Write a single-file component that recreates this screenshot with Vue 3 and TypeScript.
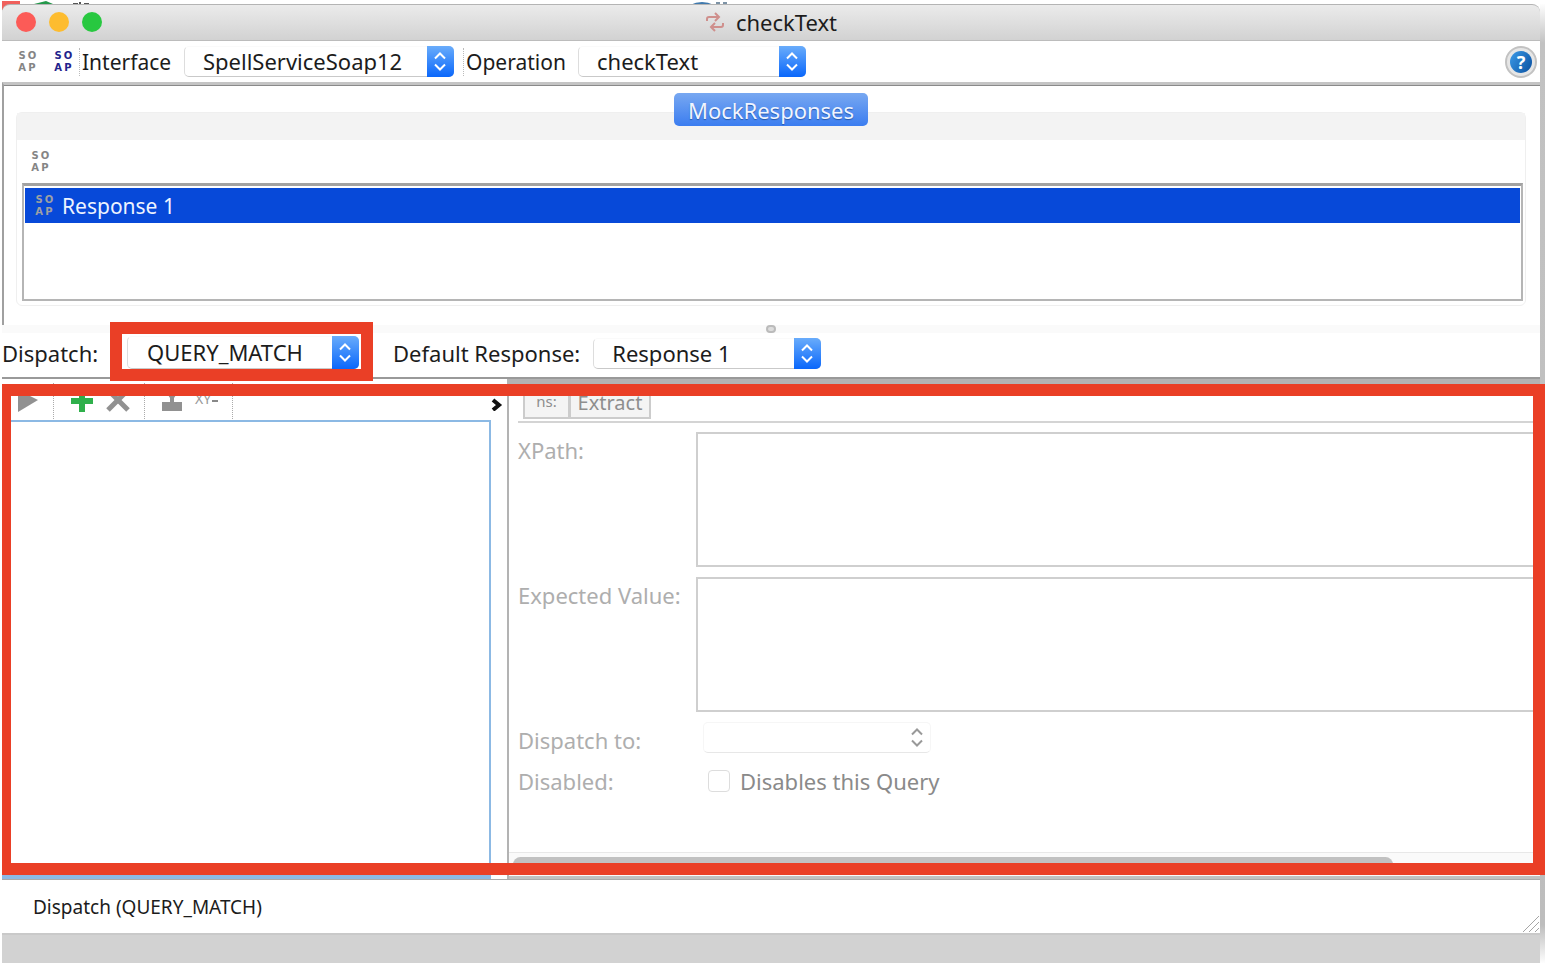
<script setup lang="ts">
import { ref } from 'vue'

const iface = ref('SpellServiceSoap12')
const operation = ref('checkText')
const dispatch = ref('QUERY_MATCH')
const defaultResponse = ref('Response 1')
const responses = ['Response 1']
const xpath = ref('')
const expected = ref('')
const soapLetters = ['S', 'O', 'A', 'P']
</script>

<template>
  <div class="desktop">
    <svg class="behind" width="760" height="10" aria-hidden="true">
      <rect x="0" y="1" width="18" height="9" fill="#f0605c" />
      <path d="M32 4 L44 1 L51 4Z" fill="#23984a" />
      <path d="M71 4h5M78 2v3M82 4h5" stroke="#555" stroke-width="2" />
      <path d="M688 5 Q700 -1 712 5Z" fill="#3f79ad" />
      <path d="M714 3h4M721 3h4" stroke="#7d93a6" stroke-width="2" />
    </svg>
    <main class="window">
      <header class="titlebar">
        <div class="lights">
          <button class="light close" aria-label="Close"></button>
          <button class="light minimize" aria-label="Minimize"></button>
          <button class="light maximize" aria-label="Zoom"></button>
        </div>
        <h1 class="title">
          <svg width="20" height="20" viewBox="0 0 20 20" fill="none" stroke="#cf8f8c" stroke-width="2" aria-hidden="true">
            <path d="M2 9V7Q2 5 4 5h9M10 1l4 4-4 4" />
            <path d="M18 11v2q0 2-2 2H7M10 11l-4 4 4 4" />
          </svg>
          checkText
        </h1>
      </header>

      <div class="toolbar">
        <button class="soap" aria-label="New mock response"><span v-for="l in soapLetters" :key="l">{{ l }}</span></button>
        <button class="soap navy" aria-label="New mock fault"><span v-for="l in soapLetters" :key="l">{{ l }}</span></button>
        <label class="tool-label" for="iface">Interface</label>
        <div class="combo wide">
          <select id="iface" v-model="iface"><option>SpellServiceSoap12</option></select>
          <svg class="arrows" viewBox="0 0 27 30" aria-hidden="true"><path d="M8 12l5-5 5 5M8 18l5 5 5-5" /></svg>
        </div>
        <label class="tool-label op" for="operation">Operation</label>
        <div class="combo">
          <select id="operation" v-model="operation"><option>checkText</option></select>
          <svg class="arrows" viewBox="0 0 27 30" aria-hidden="true"><path d="M8 12l5-5 5 5M8 18l5 5 5-5" /></svg>
        </div>
        <button class="help" aria-label="Help"><span>?</span></button>
      </div>

      <section class="responses">
        <button class="tab">MockResponses</button>
        <div class="group">
          <div class="group-head"></div>
          <div class="group-tools">
            <button class="soap" aria-label="Add response"><span v-for="l in soapLetters" :key="l">{{ l }}</span></button>
          </div>
          <ul class="list">
            <li v-for="r in responses" :key="r" class="item">
              <span class="soap pale" aria-hidden="true"><span v-for="l in soapLetters" :key="l">{{ l }}</span></span>
              {{ r }}
            </li>
          </ul>
        </div>
      </section>
      <div class="divider"><span class="knob"></span></div>

      <div class="dispatch-row">
        <label for="dispatch">Dispatch:</label>
        <div class="highlight">
          <div class="combo">
            <select id="dispatch" v-model="dispatch"><option>QUERY_MATCH</option></select>
            <svg class="arrows" viewBox="0 0 27 30" aria-hidden="true"><path d="M8 12l5-5 5 5M8 18l5 5 5-5" /></svg>
          </div>
        </div>
        <label class="default-label" for="default-response">Default Response:</label>
        <div class="combo">
          <select id="default-response" v-model="defaultResponse"><option>Response 1</option></select>
          <svg class="arrows" viewBox="0 0 27 30" aria-hidden="true"><path d="M8 12l5-5 5 5M8 18l5 5 5-5" /></svg>
        </div>
      </div>

      <section class="split">
        <div class="queries">
          <div class="query-tools">
            <button class="glyph play" aria-label="Run"><svg width="22" height="24"><path d="M1 0L21 10 1 22Z" fill="#919191" /></svg></button>
            <button class="glyph add" aria-label="Add query"><svg width="24" height="24"><path d="M12 0v22M1 11h22" stroke="#2fb04b" stroke-width="6" /></svg></button>
            <button class="glyph remove" aria-label="Remove query"><svg width="24" height="24"><path d="M2 0l20 20M22 0L2 20" stroke="#919191" stroke-width="5" /></svg></button>
            <button class="glyph clone" aria-label="Clone query"><svg width="22" height="24"><path d="M7 0h8v5l-2 3v4h8v9H1v-9h8V8L7 5Z" fill="#919191" /></svg></button>
            <button class="glyph rename" aria-label="Rename query">XY<i></i></button>
            <svg class="chevron" width="12" height="14" aria-hidden="true"><path d="M2 3l6 5-6 5" fill="none" stroke="#111" stroke-width="4" /></svg>
          </div>
          <div class="query-list"></div>
        </div>
        <div class="editor">
          <div class="editor-tabs">
            <button class="ns">ns:</button>
            <button>Extract</button>
          </div>
          <div class="form">
            <label for="xpath">XPath:</label>
            <textarea id="xpath" v-model="xpath"></textarea>
            <label for="expected">Expected Value:</label>
            <textarea id="expected" v-model="expected"></textarea>
            <label for="dispatch-to">Dispatch to:</label>
            <div class="combo off">
              <select id="dispatch-to" disabled></select>
              <svg class="arrows" viewBox="0 0 27 30" aria-hidden="true"><path d="M8 12l5-5 5 5M8 18l5 5 5-5" /></svg>
            </div>
            <span>Disabled:</span>
            <label class="check"><input type="checkbox" disabled />Disables this Query</label>
          </div>
          <div class="scroll"><div class="thumb"></div></div>
        </div>
        <div class="frame"></div>
      </section>

      <footer class="status">
        Dispatch (QUERY_MATCH)
        <svg class="grip" width="18" height="18" aria-hidden="true"><path d="M1 17L17 1M7 17L17 7M13 17l4-4" stroke="#a5a5a5" stroke-width="1" /></svg>
      </footer>
      <div class="base"></div>
    </main>
  </div>
</template>

<style>
body {
  margin: 0;
  background: #fff;
}
</style>

<style scoped>
* {
  box-sizing: border-box;
}
.desktop {
  position: relative;
  display: flex;
  min-height: 100vh;
  padding: 4px 0 0 2px;
  color: #1c1c1c;
  font-family: "Noto Sans", "Open Sans", sans-serif;
  font-size: 22px;
  line-height: 28px;
}
.behind {
  position: absolute;
  left: 2px;
  top: 0;
}
.window {
  position: relative;
  display: flex;
  flex: 1;
  flex-direction: column;
  border-right: 5px solid;
  border-image: linear-gradient(#fff, #c2c2c2 40px, #bdbdbd 920px, #fff) 1;
}
button,
select,
textarea {
  margin: 0;
  color: inherit;
  font: inherit;
}
button {
  padding: 0;
  border: 0;
  background: none;
}
.titlebar {
  display: grid;
  grid-template-columns: 1fr auto 1fr;
  align-items: center;
  height: 37px;
  padding-bottom: 2px;
  border-top: 1px solid #b4b4b4;
  border-bottom: 1px solid #bcbcbc;
  border-radius: 8px 8px 0 0;
  background: linear-gradient(#ebebeb, #d2d2d2);
}
.lights {
  display: flex;
  gap: 13px;
  padding-left: 14px;
}
.light {
  width: 20px;
  height: 20px;
  border-radius: 50%;
}
.close { background: #fc5b57; }
.minimize { background: #fdbc2f; }
.maximize { background: #28c840; }
.title {
  display: flex;
  align-items: center;
  gap: 11px;
  margin: 0;
  font-size: 22px;
  font-weight: 400;
}
.toolbar {
  display: flex;
  align-items: center;
  height: 41px;
  padding: 0 3px 0 15px;
  background: #fff;
}
.soap {
  display: grid;
  flex: none;
  grid-template-columns: 10px 10px;
  grid-auto-rows: 12px;
  width: 20px;
  color: #858585;
  font: bold 10px/12px "DejaVu Sans", sans-serif;
  text-align: center;
}
.soap.navy {
  margin-left: 16px;
  color: #23238c;
}
.soap.pale { color: #9da0a4; }
.tool-label {
  width: 99px;
  margin-left: 6px;
  padding-left: 2px;
  border-left: 1px dotted #bbb;
  font-size: 21px;
}
.tool-label.op {
  width: 109px;
  margin-left: 9px;
}
.combo {
  position: relative;
  width: 228px;
  height: 31px;
  margin-left: 6px;
}
.combo.wide { width: 270px; }
.combo select {
  display: block;
  width: 100%;
  height: 100%;
  padding: 0 28px 2px 18px;
  border: 1px solid #ddd;
  border-top-color: #fafafa;
  border-bottom-color: #c9c9c9;
  border-radius: 5px;
  background: #fff;
  appearance: none;
}
.arrows {
  position: absolute;
  top: 0;
  right: 0;
  width: 27px;
  height: 31px;
  border-radius: 0 5px 5px 0;
  background: linear-gradient(#69acfb, #0a67fb);
  fill: none;
  stroke: #fff;
  stroke-width: 2;
  pointer-events: none;
}
.help {
  display: flex;
  align-items: center;
  justify-content: center;
  width: 32px;
  height: 32px;
  margin-left: auto;
  border: 2px solid #c2c2c2;
  border-radius: 50%;
  background: #e6e6e6;
}
.help span {
  width: 22px;
  height: 22px;
  border-radius: 50%;
  background: linear-gradient(120deg, #3b9be8, #0a4f9f);
  color: #fff;
  font-size: 18px;
  font-weight: 700;
  line-height: 22px;
}
.responses {
  display: flex;
  flex-direction: column;
  height: 243px;
  padding: 8px 14px 0 12px;
  border-top: 3px solid #c4c4c4;
  border-left: 2px solid #a0a0a0;
  background: #fff;
  box-shadow: inset 0 1px #8a8a8a;
}
.tab {
  z-index: 1;
  align-self: center;
  width: 194px;
  height: 33px;
  border-radius: 5px;
  background: linear-gradient(#78a8f1, #3b7df0);
  color: #f0f5ff;
  text-shadow: 0 1px 1px #2657a8;
}
.group {
  margin-top: -14px;
  padding: 0 2px 4px 5px;
  border: 1px solid #efefef;
  border-radius: 6px;
}
.group-head {
  height: 27px;
  margin: 0 -2px 0 -5px;
  background: #f3f3f3;
}
.group-tools {
  display: flex;
  align-items: center;
  height: 43px;
  padding-left: 8px;
}
.list {
  height: 118px;
  margin: 0;
  padding: 2px 1px;
  border: 2px solid #b5b5b5;
  border-top: 3px solid #a2a2a2;
  list-style: none;
}
.item {
  display: flex;
  align-items: center;
  gap: 8px;
  height: 35px;
  padding-left: 9px;
  background: #0749d9;
  color: #edf3ff;
  font-size: 21px;
}
.divider {
  display: flex;
  justify-content: center;
  align-items: flex-start;
  height: 8px;
  background: #fafafa;
}
.knob {
  width: 10px;
  height: 8px;
  border: 2px solid #bbb;
  border-radius: 4px;
  background: #ddd;
}
.dispatch-row {
  display: flex;
  align-items: center;
  height: 44px;
  padding-bottom: 4px;
  background: #fff;
}
.highlight {
  flex: none;
  align-self: flex-start;
  z-index: 2;
  width: 263px;
  margin: -11px 0 -10px 10px;
  padding: 2px 2px 0 5px;
  border: 12px solid #ea3f26;
  background: #fff;
}
.highlight .combo {
  width: auto;
  height: 33px;
  margin: 0;
}
.highlight .arrows { height: 33px; }
.highlight select { padding-left: 19px; }
.default-label { margin-left: 20px; }
.default-label + .combo { margin-left: 13px; }
.dispatch-row > label:first-child { width: 98px; }
.split {
  position: relative;
  display: flex;
  flex: 1;
  border-top: 2px solid #999;
  background: #fff;
}
.frame {
  position: absolute;
  inset: 5px -5px 4px 0;
  border: 12px solid #ea3f26;
  border-left-width: 9px;
  pointer-events: none;
}
.queries {
  display: flex;
  flex: 0 0 505px;
  flex-direction: column;
}
.query-tools {
  display: flex;
  align-items: center;
  height: 41px;
  padding: 4px 4px 0 15px;
}
.glyph {
  display: flex;
  align-items: center;
  height: 38px;
}
.glyph.play,
.glyph.remove {
  padding-right: 14px;
  border-right: 1px dotted #aaa;
}
.glyph.add { padding: 0 12px 0 16px; }
.glyph.clone { padding: 0 12px 0 16px; }
.glyph.rename {
  gap: 1px;
  padding: 0 14px 6px 0;
  border-right: 1px dotted #aaa;
  color: #999;
  font-size: 14px;
}
.glyph.rename i {
  width: 6px;
  height: 2px;
  margin-top: 4px;
  background: #888;
}
.chevron {
  margin: 5px 0 0 auto;
}
.query-list {
  flex: 1;
  margin-right: 16px;
  border: 2px solid #8cb9e4;
  border-bottom-width: 5px;
}
.editor {
  display: flex;
  flex: 1;
  flex-direction: column;
  min-width: 0;
  border-top: 5px solid #b3b3b3;
  border-left: 2px solid #b3b3b3;
  color: #aeaeae;
}
.editor-tabs {
  display: flex;
  height: 39px;
  margin-left: 9px;
  padding: 0 0 2px 5px;
  border-bottom: 2px solid #d4d4d4;
}
.editor-tabs button {
  width: 82px;
  padding-top: 5px;
  border: 2px solid #ccc;
  border-top: 0;
  background: #f4f4f4;
  color: #8e8e8e;
  font-size: 20px;
}
.editor-tabs .ns {
  width: 46px;
  padding-top: 0;
  border-right-width: 1px;
  font-size: 15px;
}
.form {
  display: grid;
  grid-template-columns: 178px minmax(0, 1fr);
  row-gap: 10px;
  padding: 9px 0 0 9px;
}
.form > label { padding-top: 4px; }
.form textarea {
  display: block;
  width: 100%;
  height: 135px;
  border: 2px solid #cfcfcf;
  border-radius: 0;
  background: #fff;
  resize: none;
}
.combo.off {
  margin-left: 7px;
}
.combo.off select {
  border-color: #f3f3f3;
  border-bottom-color: #ddd;
}
.combo.off .arrows {
  background: none;
  stroke: #999;
}
.form > span,
.form > .check {
  margin-top: 3px;
}
.form > label.check {
  display: flex;
  align-items: center;
  gap: 10px;
  padding: 0;
  margin-left: 12px;
  color: #8a8a8a;
}
.check input {
  width: 22px;
  height: 22px;
  margin: 0;
  border: 1px solid #ddd;
  border-radius: 4px;
  background: #fff;
  appearance: none;
}
.scroll {
  height: 27px;
  margin-top: auto;
  padding: 4px 4px 0;
  border-top: 1px solid #e8e8e8;
  border-bottom: 3px solid #c0c0c0;
  background: #fafafa;
}
.thumb {
  width: 86%;
  height: 15px;
  border-radius: 8px;
  background: #c1c1c1;
}
.status {
  display: flex;
  align-items: center;
  height: 54px;
  padding-left: 31px;
  border-top: 1px solid #aaa;
  background: #fff;
  font-size: 19px;
}
.grip {
  margin: auto 0 0 auto;
}
.base {
  height: 30px;
  border-top: 2px solid #c9c9c9;
  background: #d2d2d2;
}
</style>
